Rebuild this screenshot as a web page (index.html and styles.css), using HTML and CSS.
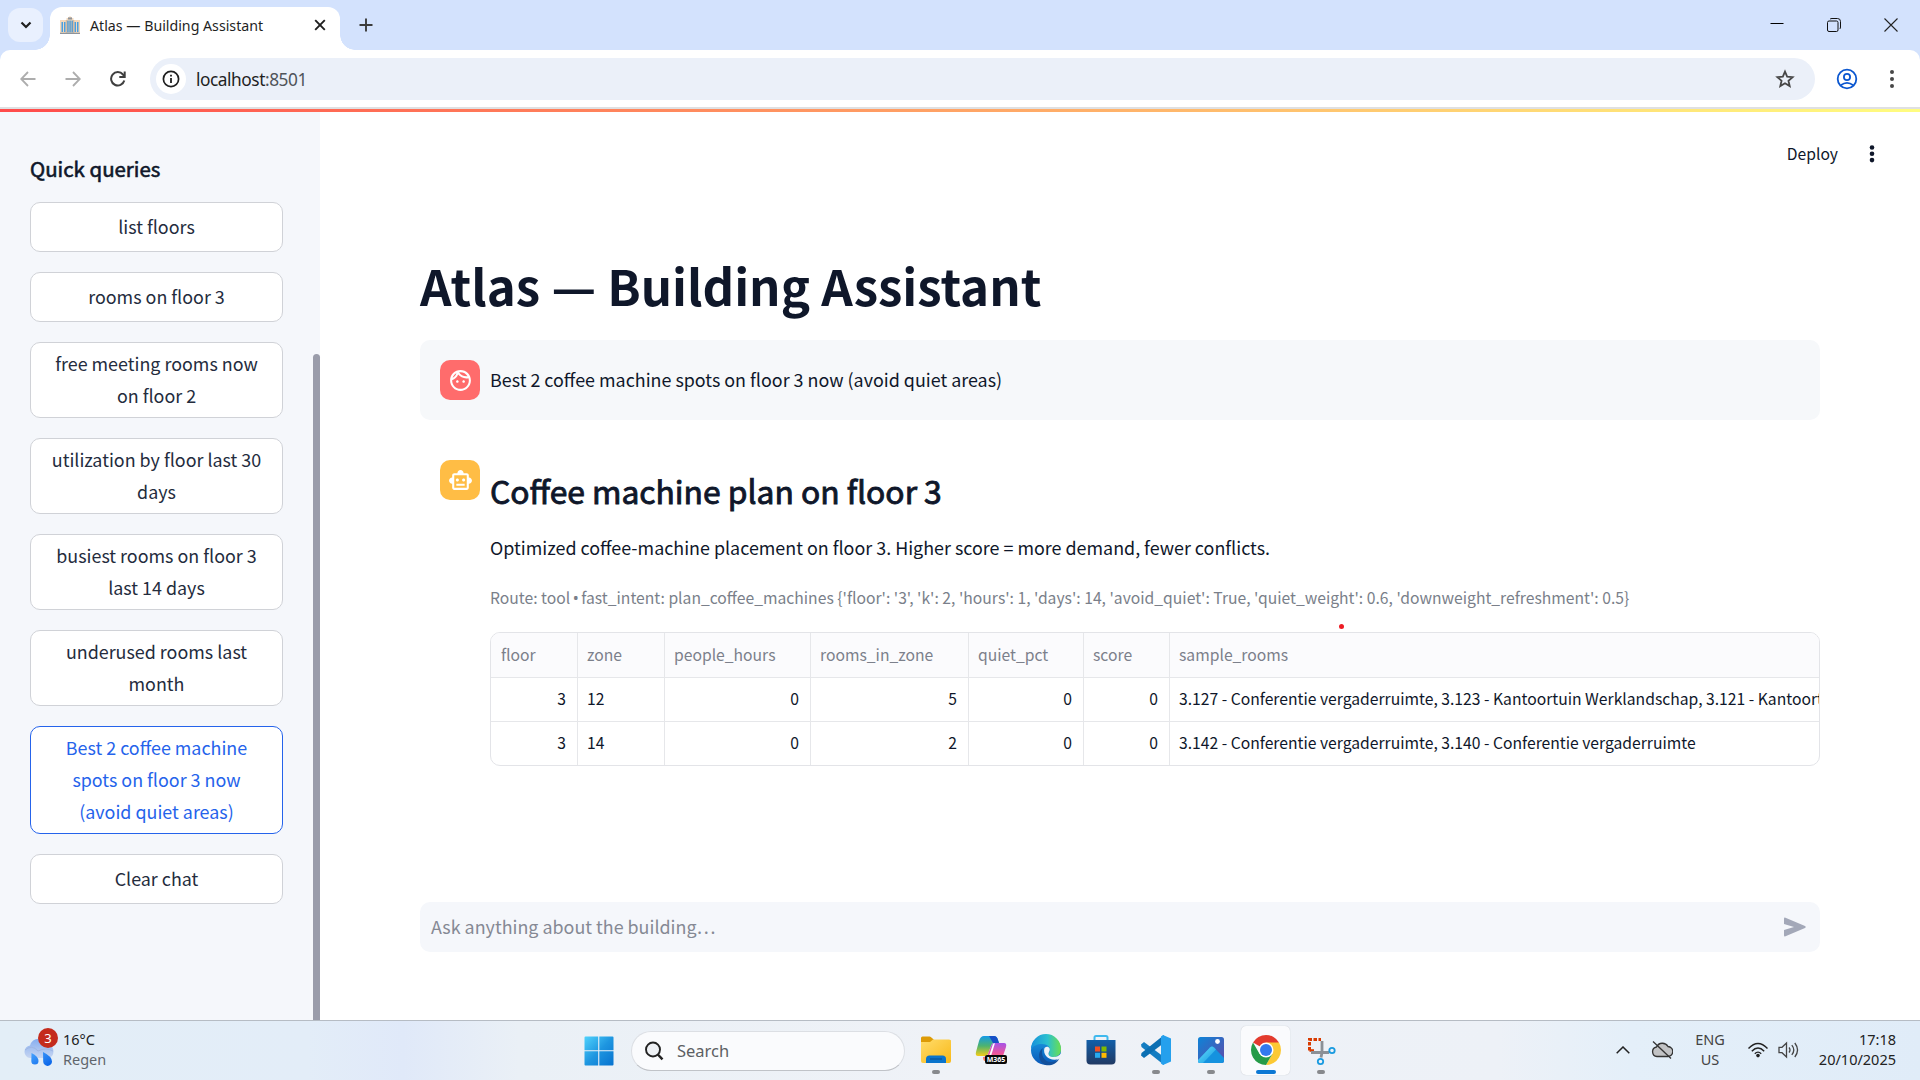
FILE: index.html
```html
<!DOCTYPE html>
<html lang="en">
<head>
<meta charset="utf-8">
<title>Atlas — Building Assistant</title>
<link rel="stylesheet" href="styles.css">
</head>
<body>
<div class="screen">
  <div class="tabstrip">
    <div class="tab-search"><svg width="12" height="8" viewBox="0 0 12 8"><path d="M1.5 1.5 6 6l4.500-4.500" fill="none" stroke="#1f1f1f" stroke-width="2.200"/></svg></div>
    <div class="tab">
      <svg class="favicon" width="20" height="18" viewBox="0 0 20 18">
        <path d="M0 4h6.500V2h1.500V1h1.500V0h1v1H12v1h1.500v2H20v13.500H0z" fill="#f3d9bd"/>
        <path d="M1.500 6h1.500v10H1.500zM4 6h1.500v10H4zM14.500 6H16v10h-1.500zM17 6h1.500v10H17z" fill="#4a9fe0"/>
        <path d="M7.300 4.500h1.300v12H7.300zM9.400 4.500h1.300v12H9.400zM11.500 4.500h1.300v12h-1.300z" fill="#3c8fd0"/>
        <path d="M6.300 4v13M13.700 4v13" stroke="#b99d86" stroke-width=".6"/>
        <path d="M0 16.700h20V18H0zM8 1.500h4v2H8z" fill="#8d949c"/>
      </svg>
      <span class="tab-title">Atlas — Building Assistant</span>
      <svg width="12" height="12" viewBox="0 0 12 12"><path d="M1.200 1.200l9.600 9.600M10.800 1.200 1.200 10.800" stroke="#1f1f1f" stroke-width="1.900"/></svg>
    </div>
    <svg class="new-tab" width="14" height="14" viewBox="0 0 14 14"><path d="M7 .5v13M.5 7h13" stroke="#3c3c3c" stroke-width="1.900"/></svg>
    <div class="window-controls">
      <svg width="14" height="14" viewBox="0 0 14 14"><path d="M.5 5.500h13" stroke="#000" stroke-width="1"/></svg>
      <svg width="14" height="14" viewBox="0 0 14 14"><rect x=".5" y="3" width="10.500" height="10.500" rx="1.500" fill="none" stroke="#111"/><path d="M3 1.200Q3.500.5 5 .5h5.500q3 0 3 3V9q0 1.500-.8 2" fill="none" stroke="#111"/></svg>
      <svg width="14" height="14" viewBox="0 0 14 14"><path d="M.5.500l13 13M13.500.500l-13 13" stroke="#222" stroke-width="1.100"/></svg>
    </div>
  </div>

  <div class="toolbar-wrap"><div class="toolbar">
    <svg class="nav-icon" width="16" height="16" viewBox="0 0 16 16"><path d="M15.500 8H1.500M8 1 1.200 8 8 15" fill="none" stroke="#adadad" stroke-width="1.800"/></svg>
    <svg class="nav-icon" width="16" height="16" viewBox="0 0 16 16"><path d="M.5 8h14M8 1l6.800 7L8 15" fill="none" stroke="#adadad" stroke-width="1.800"/></svg>
    <svg class="nav-icon" width="16" height="16" viewBox="0 0 16 16"><path d="M14.300 9.500A6.700 6.700 0 1 1 13 3.500L14.300 5" fill="none" stroke="#3f3f3f" stroke-width="2"/><path d="M14.700.6V6H9.300" fill="none" stroke="#3f3f3f" stroke-width="2"/></svg>
    <div class="omnibox">
      <div class="site-info"><svg width="18" height="18" viewBox="0 0 18 18"><circle cx="9" cy="9" r="7.600" fill="none" stroke="#1f1f1f" stroke-width="1.700"/><path d="M9 8v5M9 4.800v1.800" stroke="#1f1f1f" stroke-width="1.800"/></svg></div>
      <span class="url">localhost<span class="port">:8501</span></span>
      <svg class="star" width="20" height="20" viewBox="0 0 20 20"><path d="M10 2.600l2.150 5.050 5.450.480-4.150 3.600 1.250 5.350L10 14.250l-4.700 2.830 1.250-5.350L2.400 8.130l5.450-.480z" fill="none" stroke="#474747" stroke-width="1.800"/></svg>
    </div>
    <svg class="profile" width="22" height="22" viewBox="0 0 22 22"><g fill="none" stroke="#0b57d0" stroke-width="1.800"><circle cx="11" cy="11" r="9.300"/><circle cx="11" cy="9" r="3.100"/><path d="M4.800 17.200q6.200-4.600 12.400 0"/></g></svg>
    <svg class="menu" width="6" height="20" viewBox="0 0 6 20"><g fill="#474747"><circle cx="3" cy="3" r="2"/><circle cx="3" cy="10" r="2"/><circle cx="3" cy="17" r="2"/></g></svg>
  </div></div>
  <div class="decoration"></div>

  <div class="app">
    <aside class="sidebar">
      <div class="sidebar-content">
        <h3 class="sidebar-title">Quick queries</h3>
        <button class="query">list floors</button>
        <button class="query">rooms on floor 3</button>
        <button class="query">free meeting rooms now<br>on floor 2</button>
        <button class="query">utilization by floor last 30<br>days</button>
        <button class="query">busiest rooms on floor 3<br>last 14 days</button>
        <button class="query">underused rooms last<br>month</button>
        <button class="query active">Best 2 coffee machine<br>spots on floor 3 now<br>(avoid quiet areas)</button>
        <button class="query">Clear chat</button>
      </div>
      <div class="scroll-thumb"></div>
    </aside>

    <main class="main">
      <header class="app-header">
        <span class="deploy">Deploy</span>
        <svg width="6" height="20" viewBox="0 0 6 20"><g fill="#0f172a"><circle cx="3" cy="3.500" r="2.300"/><circle cx="3" cy="9.800" r="2.300"/><circle cx="3" cy="16.100" r="2.300"/></g></svg>
      </header>
      <h1 class="title">Atlas — Building Assistant</h1>
      <section class="message user">
        <div class="avatar face"><svg width="25" height="25" viewBox="0 0 24 24"><path fill="#fff" d="M10.250 13c0 .690-.560 1.250-1.250 1.250S7.750 13.690 7.750 13s.560-1.250 1.250-1.250 1.250.560 1.250 1.250zm4.750-1.250c-.690 0-1.250.560-1.250 1.250s.560 1.250 1.250 1.250 1.250-.560 1.250-1.250-.560-1.250-1.250-1.250zm7 .250c0 5.520-4.480 10-10 10S2 17.520 2 12 6.480 2 12 2s10 4.480 10 10zM10.660 4.120C12.060 6.440 14.600 8 17.500 8c.460 0 .910-.050 1.340-.120C17.440 5.560 14.900 4 12 4c-.460 0-.910.050-1.340.120zM4.420 9.470c1.710-.970 3.030-2.550 3.660-4.440C6.370 6 5.050 7.580 4.420 9.470zM20 12c0-.780-.120-1.530-.330-2.240-.700.150-1.420.240-2.170.240-3.130 0-5.920-1.440-7.760-3.690C8.690 8.870 6.600 10.880 4 11.860c.010.040 0 .090 0 .140 0 4.410 3.590 8 8 8s8-3.590 8-8z"/></svg></div>
        <p class="text">Best 2 coffee machine spots on floor 3 now (avoid quiet areas)</p>
      </section>
      <section class="message">
        <div class="avatar bot"><svg width="25" height="25" viewBox="0 0 24 24"><path fill="#fff" d="M20 9V7c0-1.100-.900-2-2-2h-3c0-1.660-1.340-3-3-3S9 3.340 9 5H6c-1.100 0-2 .900-2 2v2c-1.660 0-3 1.340-3 3s1.340 3 3 3v4c0 1.100.900 2 2 2h12c1.100 0 2-.900 2-2v-4c1.660 0 3-1.340 3-3s-1.340-3-3-3zm-2 10H6V7h12v12zm-9-6c-.830 0-1.500-.670-1.500-1.500S8.170 10 9 10s1.500.670 1.500 1.500S9.830 13 9 13zm7.500-1.500c0 .830-.670 1.500-1.500 1.500s-1.500-.670-1.500-1.500.670-1.500 1.500-1.500 1.500.670 1.500 1.500zM8 15h8v2H8v-2z"/></svg></div>
        <div class="answer">
          <h2 class="subtitle">Coffee machine plan on floor 3</h2>
          <p class="text">Optimized coffee-machine placement on floor 3. Higher score = more demand, fewer conflicts.</p>
          <p class="caption">Route: tool <span class="bullet">•</span> fast_intent: plan_coffee_machines {'floor': '3', 'k': 2, 'hours': 1, 'days': 14, 'avoid_quiet': True, 'quiet_weight': 0.6, 'downweight_refreshment': 0.5}</p>
          <div class="grid">
            <span class="pointer"></span>
            <div class="row head"><span>floor</span><span>zone</span><span>people_hours</span><span>rooms_in_zone</span><span>quiet_pct</span><span>score</span><span>sample_rooms</span></div>
            <div class="row"><span class="num">3</span><span>12</span><span class="num">0</span><span class="num">5</span><span class="num">0</span><span class="num">0</span><span>3.127 - Conferentie vergaderruimte, 3.123 - Kantoortuin Werklandschap, 3.121 - Kantoortuin</span></div>
            <div class="row"><span class="num">3</span><span>14</span><span class="num">0</span><span class="num">2</span><span class="num">0</span><span class="num">0</span><span>3.142 - Conferentie vergaderruimte, 3.140 - Conferentie vergaderruimte</span></div>
          </div>
        </div>
      </section>
      <div class="chat-input">
        <span>Ask anything about the building…</span>
        <svg width="24" height="20" viewBox="0 0 24 20"><path d="M1 1.800Q1 .200 2.500.700L22 9q1.800 1 0 2L2.500 19.300Q1 19.800 1 18.200V13l10-3L1 7z" fill="#a3a8b8"/></svg>
      </div>
    </main>
  </div>

  <footer class="taskbar">
    <div class="weather">
      <div class="weather-icon">
        <svg width="32" height="32" viewBox="0 0 32 32">
          <defs><linearGradient id="cloud" x1="0" y1="0" x2="0" y2="1"><stop offset="0" stop-color="#86aef0"/><stop offset="1" stop-color="#c6d5f1"/></linearGradient><linearGradient id="drop" x1="0" y1="0" x2="1" y2="1"><stop offset="0" stop-color="#4aa5ff"/><stop offset="1" stop-color="#0560e6"/></linearGradient></defs>
          <path d="M7 24a6.300 6.300 0 0 1 0-12.500A9.500 9.500 0 0 1 25 11a6.600 6.600 0 0 1 0 13z" fill="url(#cloud)"/>
          <path d="M2 16q7-6 13 1 8-4 15 0" fill="none" stroke="#9fb6e4" stroke-width="1"/>
          <path d="M8.500 19q7 3.500 7 8a3.600 3.600 0 0 1-7.200 0zM20 18q9 4.500 9 9.500a4.400 4.400 0 0 1-8.800 0z" fill="url(#drop)"/>
        </svg>
        <span class="badge">3</span>
      </div>
      <div class="weather-text"><span>16°C</span><span class="dim">Regen</span></div>
    </div>
    <svg class="start" width="30" height="30" viewBox="0 0 30 30"><defs><linearGradient id="win" x1="0" y1="0" x2="1" y2="1"><stop offset="0" stop-color="#4fd2fc"/><stop offset=".5" stop-color="#1e96e0"/><stop offset="1" stop-color="#0672cf"/></linearGradient></defs><path d="M.5 1.500q0-1 1-1h12.700v13.700H.500zM15.300.500H28.500q1 0 1 1v12.700H15.300zM.5 15.300h13.700v14.200H1.500q-1 0-1-1zM15.300 15.300h14.200v13.200q0 1-1 1H15.300z" fill="url(#win)"/></svg>
    <div class="search"><svg width="20" height="20" viewBox="0 0 20 20"><circle cx="9" cy="8.500" r="7" fill="#eef1f5" stroke="#222" stroke-width="1.900"/><path d="M13.800 13.500l4.700 4.900" stroke="#222" stroke-width="2.500"/></svg><span>Search</span></div>
    <div class="apps">
      <div class="app-icon"><svg width="32" height="32" viewBox="0 0 32 32"><defs><linearGradient id="fold" x1="0" y1="0" x2="1" y2="1"><stop offset="0" stop-color="#ffdc6b"/><stop offset="1" stop-color="#f9b918"/></linearGradient></defs><path d="M1 9V4q0-1.500 1.500-1.500h7Q11 2.500 14 6h15q2 0 2 2z" fill="#dd9b07"/><path d="M1 8h9l3-2.500h16q2 0 2 1.500v20q0 2-2 2H3q-2 0-2-2z" fill="url(#fold)"/><path d="M6 29v-4q0-3.500 3.500-3.500h13q3.500 0 3.500 3.500v4z" fill="#0a74cc"/><path d="M10 25h12" stroke="#064a8c" stroke-width="1"/></svg><i></i></div>
      <div class="app-icon"><svg width="32" height="32" viewBox="0 0 32 32"><defs><linearGradient id="cpa" x1="0" y1="0" x2="0" y2="1"><stop offset="0" stop-color="#139ae8"/><stop offset=".5" stop-color="#4eb36e"/><stop offset="1" stop-color="#f5cc18"/></linearGradient><linearGradient id="cpb" x1="0" y1="0" x2="0" y2="1"><stop offset="0" stop-color="#a553e8"/><stop offset=".6" stop-color="#f0569a"/><stop offset="1" stop-color="#ff8a4c"/></linearGradient></defs><path d="M9 2h10q3 0 4 4l1 3h-5q-2 0-3 3l-3 8q-1 2-3 2H3q-3 0-2-4L4 7q1.500-5 5-5z" fill="url(#cpa)"/><path d="M14 2h5q3 0 4 4l1 3h-6z" fill="#164fc7"/><path d="M20 9h9q3 0 2 4l-3 9q-1 5-5 5H10q-2 0-2-4 4 0 5-3l3-8q1-3 4-3z" fill="url(#cpb)"/><path d="M14 22l4-12 2-1-4 13z" fill="#fff"/><rect x="10" y="21" width="22" height="9" rx="2" fill="#080808"/><text x="21" y="28" text-anchor="middle" class="m365">M365</text></svg></div>
      <div class="app-icon"><svg width="32" height="32" viewBox="0 0 32 32"><defs><linearGradient id="ea" x1="0" y1="0" x2="1" y2="0"><stop offset="0" stop-color="#1690dc"/><stop offset=".55" stop-color="#2bc0cf"/><stop offset="1" stop-color="#6bdf4f"/></linearGradient><linearGradient id="eb" x1="0" y1="0" x2="0" y2="1"><stop offset="0" stop-color="#1c9fe4"/><stop offset="1" stop-color="#0a58b8"/></linearGradient></defs><circle cx="16" cy="16" r="15" fill="url(#eb)"/><path d="M1 15A15 15 0 0 1 31 15c0 6-4 8-8 8-3 0-5-2-4-4 3-5-1-9-7-9-5 0-9 2-11 5z" fill="url(#ea)"/><path d="M13 14c-3 6 1 15 9 14 4-.500 6-2 7.500-4-3 7-10 8-14 7-7-2-9-13-2.500-17z" fill="#12509c"/><path d="M14.500 14c3-3 7 0 4.500 4-1.500 3 1 5 4.500 5 3 0 5-1 8-3.500v4l-2.500 1.300C21 28 12 22 14.500 14z" fill="#eef2f8"/></svg></div>
      <div class="app-icon"><svg width="32" height="32" viewBox="0 0 32 32"><defs><linearGradient id="st" x1="0" y1="0" x2="0" y2="1"><stop offset="0" stop-color="#125fa9"/><stop offset="1" stop-color="#213963"/></linearGradient></defs><path d="M9.500 7V3.500q0-1.500 1.500-1.500h10q1.500 0 1.500 1.500V7" fill="none" stroke="#3fb9ee" stroke-width="2"/><path d="M1.500 6h29v20.500q0 4-4 4h-21q-4 0-4-4z" fill="url(#st)"/><path d="M10 12.500h5v5h-5z" fill="#f25022"/><path d="M16.500 12.500h5v5h-5z" fill="#7fba00"/><path d="M10 18.800h5v5h-5z" fill="#27a9ee"/><path d="M16.500 18.800h5v5h-5z" fill="#ffb900"/></svg></div>
      <div class="app-icon"><svg width="32" height="32" viewBox="0 0 32 32"><path d="M1 10.500l3-2.500L24 23v8L1.500 13z" fill="#147dc2"/><path d="M1 21.500L4 24 24 9V1L1.500 19z" fill="#0b6fb3"/><path d="M23 1l8 3.500v23L23 31l-2-1.500V2.500z" fill="#25a0ed"/></svg><i></i></div>
      <div class="app-icon"><svg width="32" height="32" viewBox="0 0 32 32"><defs><linearGradient id="ph" x1="0" y1="0" x2="1" y2="1"><stop offset="0" stop-color="#0d84d8"/><stop offset="1" stop-color="#6049a8"/></linearGradient><linearGradient id="pm" x1="0" y1="0" x2="1" y2="1"><stop offset="0" stop-color="#69e0fb"/><stop offset="1" stop-color="#1197e2"/></linearGradient></defs><rect x="3" y="3" width="26" height="26" rx="2.500" fill="url(#ph)"/><path d="M3 27 15 13.500q2-2 4 0L29 24v3q0 2-2 2H5q-2 0-2-2z" fill="#1592df"/><path d="M3 26 15 13.500q2-2 4 0l2 2L8 29H5q-2 0-2-2z" fill="url(#pm)"/><circle cx="22.500" cy="7.500" r="2.400" fill="#fff"/></svg><i></i></div>
      <div class="app-icon current"><svg width="32" height="32" viewBox="0 0 32 32"><path d="M16 16 3.010 8.500A15 15 0 0 1 28.990 8.500z" fill="#e33b2e"/><path d="M28.990 8.500A15 15 0 0 1 16 31L22.500 19.500 16 8.500z" fill="#fcc934"/><path d="M3.010 8.500A15 15 0 0 0 16 31L22.500 19.700 16 22 9.500 19.700z" fill="#259b48"/><circle cx="16" cy="16" r="7.500" fill="#fff"/><circle cx="16" cy="16" r="6" fill="#3279ee"/></svg><i></i></div>
      <div class="app-icon"><svg width="32" height="32" viewBox="0 0 32 32"><path d="M4.500 16.500V5.500H16" fill="none" stroke="#d83b01" stroke-width="3" stroke-dasharray="3.500 1.500"/><path d="M4.500 16.500H9" fill="none" stroke="#d83b01" stroke-width="2.600"/><path d="M17 7v11.500l-1 5M6 18.500h18" fill="none" stroke="#8b9096" stroke-width="2.800"/><circle cx="27" cy="16.500" r="2.700" fill="none" stroke="#1a9be0" stroke-width="1.800"/><circle cx="15.500" cy="27.500" r="2.700" fill="none" stroke="#1a9be0" stroke-width="1.800"/></svg><i></i></div>
    </div>
    <div class="tray">
      <svg class="tray-up" width="14" height="8" viewBox="0 0 14 8"><path d="M.7 7.300 7 1l6.300 6.300" fill="none" stroke="#222" stroke-width="1.500"/></svg>
      <svg class="tray-cloud" width="22" height="20" viewBox="0 0 22 20"><path d="M6 16.500A4.800 4.800 0 0 1 5.500 7 6.500 6.500 0 0 1 17 6.500a5 5 0 0 1-.5 10z" fill="#c2c3c5" stroke="#333" stroke-width="1.300"/><path d="M2 1.500 20 18.500" stroke="#333" stroke-width="1.300"/></svg>
      <div class="lang"><span>ENG</span><span>US</span></div>
      <svg class="tray-wifi" width="22" height="16" viewBox="0 0 22 16"><g fill="none" stroke="#222" stroke-width="1.400"><path d="M1.500 6.500q9.500-10 19 0M4.800 9.200q6.200-6.500 12.400 0M7.800 11.800q3.200-3.400 6.400 0"/></g><circle cx="11" cy="13.600" r="1.800" fill="#222"/></svg>
      <svg class="tray-vol" width="22" height="18" viewBox="0 0 22 18"><g fill="none" stroke="#444" stroke-width="1.300"><path d="M1 6.300h3L8.500 2v14L4 11.700H1z"/><path d="M11 6.500q2 2.500 0 5M13.800 4.200q4 4.800 0 9.600M16.800 2q5.500 7 0 14"/></g></svg>
      <div class="clock"><span>17:18</span><span>20/10/2025</span></div>
    </div>
  </footer>
</div>
</body>
</html>
```
FILE: styles.css
```css
* { box-sizing: border-box; }
body {
  margin: 0;
  font-family: "Noto Sans CJK SC", "Noto Sans", sans-serif;
  font-size: 17.9px;
  color: #0f172a;
}
svg { display: block; flex: none; }
h1, h2, h3, p { margin: 0; white-space: nowrap; }
.screen { width: 1920px; height: 1080px; overflow: hidden; display: flex; flex-direction: column; background: #fff; }

/* browser chrome */
.tabstrip { height: 50px; background: #d3e2fd; display: flex; align-items: center; padding-left: 8px; font-family: "Noto Sans", sans-serif; }
.tab-search { width: 35px; height: 34px; border-radius: 12px; background: #e9f0fe; display: flex; align-items: center; justify-content: center; }
.tab { position: relative; align-self: flex-end; width: 290px; height: 43px; margin-left: 7px; padding: 0 14px 7px 10px; background: #fff; border-radius: 12px 12px 0 0; display: flex; align-items: center; }
.tab::before, .tab::after { content: ""; position: absolute; bottom: 0; width: 15px; height: 15px; }
.tab::before { left: -15px; background: radial-gradient(circle at 0 0, transparent 14.5px, #fff 15px); }
.tab::after { right: -15px; background: radial-gradient(circle at 100% 0, transparent 14.5px, #fff 15px); }
.tab-title { flex: 1; margin-left: 10px; padding-top: 1px; font-size: 14.2px; line-height: 20px; white-space: nowrap; color: #1f1f1f; }
.new-tab { margin-left: 19px; }
.window-controls { margin-left: auto; padding-right: 22px; display: flex; gap: 43px; }
.toolbar-wrap { background: #d3e2fd; }
.toolbar { height: 57px; background: #fff; border-radius: 10px 10px 0 0; display: flex; align-items: center; padding: 1px 25px 0 20px; }
.nav-icon { margin-right: 29px; }
.omnibox { flex: 1; height: 42px; margin-left: -5px; padding: 0 20px 0 6px; border-radius: 21px; background: #ebf0f9; display: flex; align-items: center; }
.site-info { width: 30px; height: 30px; border-radius: 50%; background: #fff; display: flex; align-items: center; justify-content: center; }
.url { flex: 1; margin-left: 10px; padding-top: 2px; font-family: "Noto Sans", sans-serif; font-size: 17.3px; letter-spacing: -0.45px; line-height: 24px; color: #1f1f1f; }
.port { color: #50545a; }
.profile { margin-left: 21px; }
.menu { margin-left: 31px; }
.decoration { height: 5px; border-top: 2px solid #dfe0e2; background: linear-gradient(90deg, #ff4b4b, #fffd80); }

/* app shell */
.app { flex: 1; display: flex; min-height: 0; }
.sidebar { width: 320px; background: #f5f7fb; display: flex; }
.sidebar-content { width: 313px; padding: 42px 30px 0; display: flex; flex-direction: column; gap: 20px; }
.sidebar-title { font-size: 20.45px; line-height: 28px; font-weight: 400; -webkit-text-stroke: 0.6px currentColor; }
.query { min-height: 50px; padding: 4px 0 6px; border: 1px solid #d0d2d7; border-radius: 10px; background: #fff; font: inherit; line-height: 32px; color: #242c3d; white-space: nowrap; }
.query.active { border-color: #2563eb; color: #2563eb; }
.scroll-thumb { width: 7px; margin-top: 242px; border-radius: 4px 4px 0 0; background: #9a9caa; }

.main { flex: 1; padding: 0 100px; display: flex; flex-direction: column; }
.app-header { height: 84px; margin-right: -55px; display: flex; align-items: center; justify-content: flex-end; gap: 31px; font-size: 15.65px; }
.deploy { padding-bottom: 2px; }
.title { margin-top: 56px; font-size: 49.2px; line-height: 66px; font-weight: 700; }
.message { display: flex; gap: 10px; padding: 20px 0 20px 20px; border-radius: 10px; }
.message.user { margin-top: 22px; background: #f6f8fa; margin-bottom: 20px; }
.avatar { width: 40px; height: 40px; border-radius: 10px; display: flex; align-items: center; justify-content: center; flex: none; }
.face { background: #ff6c6c; }
.bot { background: #ffbd45; }
.text { line-height: 32px; margin-top: 3px; }
.answer { flex: 1; min-width: 0; }
.subtitle { font-size: 31.8px; line-height: 42px; font-weight: 400; margin-top: 9px; -webkit-text-stroke: 0.9px currentColor; }
.answer .text { margin-top: 20px; }
.caption { font-size: 15.69px; line-height: 28px; margin-top: 21px; color: #7a7f8a; }
.bullet { display: inline-block; width: 6px; margin: 0 -1px; font-family: "Noto Sans", sans-serif; font-size: 16px; line-height: 1; }

.grid { position: relative; height: 134px; margin-top: 20px; border: 1px solid #e3e4e8; border-radius: 10px; font-size: 15.69px; }
.pointer { position: absolute; left: 848px; top: -9px; width: 5px; height: 5px; border-radius: 50%; background: #ed1c24; }
.row { display: grid; grid-template-columns: 87px 87px 146px 158px 115px 86px 1fr; height: 44px; line-height: 41px; border-bottom: 1px solid #e6e7ea; }
.row:last-child { border-bottom: 0; height: 43px; }
.row > span { padding: 0 11px 0 9px; border-right: 1px solid #e6e7ea; white-space: nowrap; overflow: hidden; }
.row > span:first-child { padding-left: 10px; }
.row > span:last-child { border-right: 0; padding-right: 0; }
.row .num { text-align: right; }
.row.head { height: 45px; line-height: 43px; background: #fbfbfd; border-radius: 9px 9px 0 0; color: #7c808b; }
.chat-input { margin-top: 116px; height: 50px; padding: 0 13px 0 11px; border-radius: 10px; background: #f5f7fb; color: #858994; display: flex; align-items: center; justify-content: space-between; }
.chat-input span { padding-bottom: 2px; }

/* taskbar */
.taskbar { height: 60px; border-top: 1px solid #b6bcc4; background: linear-gradient(90deg, #e3eef7 0, #e3edf8 16%, #e0e9f9 21%, #eaf0f6 27%, #eff2f7 50%, #edf1f7 78%, #e4eff9 85%, #e0ecf8 100%); display: flex; align-items: center; font-family: "Noto Sans", sans-serif; font-size: 14.5px; color: #222; }
.weather { width: 584px; padding: 0 0 2px 23px; display: flex; align-items: center; gap: 8px; }
.weather-icon { position: relative; }
.badge { position: absolute; left: 15px; top: -6px; width: 20px; height: 20px; border-radius: 50%; background: #c42b1c; color: #fff; font-size: 13px; line-height: 20px; text-align: center; }
.weather-text, .lang, .clock { display: flex; flex-direction: column; line-height: 20px; padding-bottom: 2px; }
.dim { color: #5f656c; }
.start { margin-right: 17px; }
.search { width: 274px; height: 40px; border-radius: 20px; border: 1px solid #dcdfe4; border-bottom-color: #c0c3c8; background: #fafbfd; padding-left: 12px; display: flex; align-items: center; gap: 13px; font-size: 16.5px; color: #5d5f63; }
.apps { display: flex; margin-left: 3px; }
.app-icon { width: 55px; height: 59px; display: flex; flex-direction: column; align-items: center; padding-top: 13px; }
.app-icon i { width: 8px; height: 4px; margin-top: 4px; border-radius: 2px; background: #87898d; }
.current { width: 49px; height: 49px; margin: 5px 3px 0; padding-top: 8px; background: #fafbfd; border-radius: 5px; box-shadow: 0 0 1px #b8bcc2; }
.current i { width: 20px; background: #0c78d4; }
.m365 { font: 700 7px "Noto Sans", sans-serif; fill: #fff; }
.tray { margin-left: auto; padding: 0 24px 2px 0; display: flex; align-items: center; }
.lang { width: 40px; align-items: center; margin: 0 17px; color: #444; }
.tray-cloud { margin-left: 21px; }
.tray-vol { margin-left: 9px; }
.clock { width: 96px; align-items: flex-end; white-space: nowrap; }
```
